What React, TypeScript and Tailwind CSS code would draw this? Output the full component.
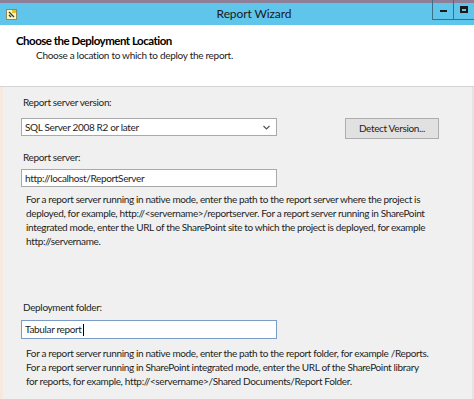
import React from 'react';

const font = { fontFamily: 'Lato, "Noto Sans", sans-serif' };

export default function App() {
  return (
    <div className="w-[474px] h-[399px] overflow-hidden flex flex-col bg-[#f0f0f0] text-[#1e1e1e]" style={font}>
      {/* strip of the window behind */}
      <div className="h-[3px] bg-[#8e7f98] shrink-0" />

      {/* Title bar */}
      <div className="h-[22px] shrink-0 bg-[#5fc5ea] flex items-center relative">
        <div className="w-[22px] flex justify-center">
          <svg width="11" height="11" viewBox="0 0 11 11">
            <rect x="0.5" y="0.5" width="10" height="10" fill="#fdf6c0" stroke="#8a8a5a" />
            <path d="M3 3 L8 8 M3 6 L5 8" stroke="#333" strokeWidth="1.2" />
            <rect x="6" y="1" width="4" height="3" fill="#e8c02a" />
          </svg>
        </div>
        <div className="flex-1 text-center text-[12px] tracking-[-0.1px] text-[#1a1a1a] pl-[12px]">Report Wizard</div>
        <div className="absolute right-0 top-[-3px] flex h-[20px]">
          <div className="w-[22px] border border-[#3d6f86] border-t-0 flex items-center justify-center">
            <div className="w-[7px] h-[2px] bg-[#1a1a1a] mt-[2px]" />
          </div>
          <div className="w-[20px] border-b border-[#3d6f86] flex items-center justify-center">
            <div className="w-[8px] h-[7px] border-2 border-[#1a1a1a] border-t-[3px]" />
          </div>
        </div>
      </div>

      {/* Header */}
      <div className="h-[62px] shrink-0 bg-white border-b border-[#d4d4d4] pl-[16px] pt-[7px]">
        <div className="text-[11.5px] font-bold leading-[17px] tracking-[-0.5px] text-black">Choose the Deployment Location</div>
        <div className="text-[10px] leading-[13px] tracking-[-0.3px] pl-[20px] text-[#222]">Choose a location to which to deploy the report.</div>
      </div>

      {/* Body */}
      <div className="flex-1 flex border-l-[3px] border-[#f7e9df]">
        <div className="flex-1 pl-[18px] pt-[8px] flex flex-col text-[10px] tracking-[-0.35px]">
          <div className="leading-[14px] pl-[2px]">Report server version:</div>
          <div className="flex items-start mt-[9px]">
            <div className="w-[256px] h-[18px] bg-white border border-[#a9a9a9] flex items-center justify-between pl-[3px] pr-[6px]">
              <span className="leading-[14px]">SQL Server 2008 R2 or later</span>
              <svg width="7" height="5" viewBox="0 0 7 5">
                <path d="M0.5 1 L3.5 4 L6.5 1" stroke="#555" strokeWidth="1.2" fill="none" />
              </svg>
            </div>
            <div className="ml-[68px] w-[94px] h-[21px] bg-[#e1e1e1] border border-[#adadad] flex items-center justify-center">
              Detect Version...
            </div>
          </div>

          <div className="leading-[14px] pl-[2px] mt-[11px]">Report server:</div>
          <div className="w-[256px] h-[18px] bg-white border border-[#a9a9a9] flex items-center pl-[3px] mt-[5px]">
            http://localhost/ReportServer
          </div>
          <div className="pl-[5px] pt-[5px] leading-[14px] whitespace-nowrap">
            For a report server running in native mode, enter the path to the report server where the project is<br />
            deployed, for example, http://&lt;servername&gt;/reportserver. For a report server running in SharePoint<br />
            integrated mode, enter the URL of the SharePoint site to which the project is deployed, for example<br />
            http://servername.
          </div>

          <div className="leading-[14px] pl-[2px] mt-[52px]">Deployment folder:</div>
          <div className="w-[256px] h-[19px] bg-white border border-[#7a9cc7] flex items-center pl-[3px] mt-[6px]">
            Tabular report<span className="w-px h-[12px] bg-black ml-px" />
          </div>
          <div className="pl-[5px] pt-[7px] leading-[14px] whitespace-nowrap">
            For a report server running in native mode, enter the path to the report folder, for example /Reports.<br />
            For a report server running in SharePoint integrated mode, enter the URL of the SharePoint library<br />
            for reports, for example, http://&lt;servername&gt;/Shared Documents/Report Folder.
          </div>
        </div>
        <div className="w-[2px] bg-[#e4e4e4]" />
      </div>
    </div>
  );
}
